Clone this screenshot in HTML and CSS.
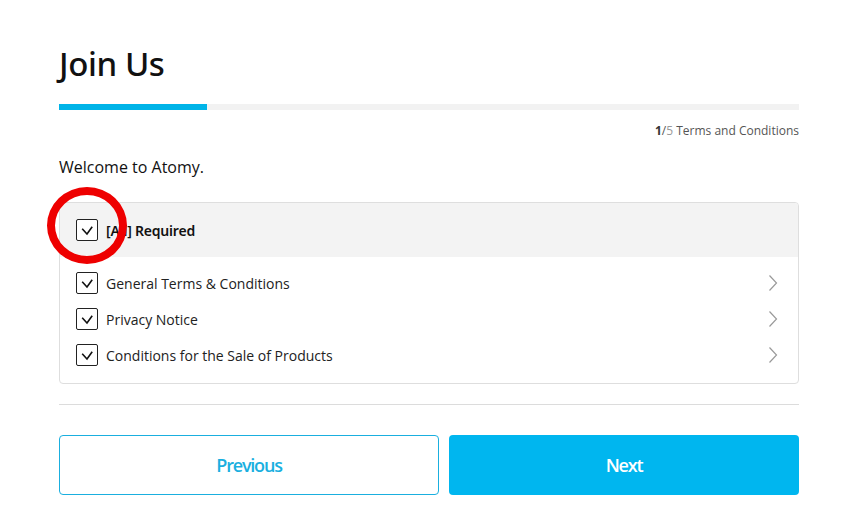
FILE: index.html
```html
<!DOCTYPE html>
<html lang="en">
<head>
<meta charset="utf-8">
<title>Join Us</title>
<link rel="stylesheet" href="styles.css">
</head>
<body>
<div class="page">
  <h1 class="title">Join Us</h1>
  <div class="progress"><div class="progress-fill"></div></div>
  <div class="step"><b>1</b>/<span class="step-total">5</span> Terms and Conditions</div>
  <p class="welcome">Welcome to Atomy.</p>
  <div class="terms">
    <div class="terms-head">
      <span class="check"><svg viewBox="0 0 22 22" width="22" height="22"><path d="M6.2 9.8 L11 15 L16.2 7.8" fill="none" stroke="#111" stroke-width="1.6"/></svg></span>
      <span class="head-label">[All] Required</span>
    </div>
    <div class="terms-list">
      <div class="term">
        <span class="check"><svg viewBox="0 0 22 22" width="22" height="22"><path d="M6.2 9.8 L11 15 L16.2 7.8" fill="none" stroke="#111" stroke-width="1.6"/></svg></span>
        <span class="term-label">General Terms &amp; Conditions</span>
        <svg class="chev" viewBox="0 0 10 18" width="10" height="18"><path d="M1.5 1.5 L8.5 9 L1.5 16.5" fill="none" stroke="#9a9a9a" stroke-width="1.2"/></svg>
      </div>
      <div class="term">
        <span class="check"><svg viewBox="0 0 22 22" width="22" height="22"><path d="M6.2 9.8 L11 15 L16.2 7.8" fill="none" stroke="#111" stroke-width="1.6"/></svg></span>
        <span class="term-label">Privacy Notice</span>
        <svg class="chev" viewBox="0 0 10 18" width="10" height="18"><path d="M1.5 1.5 L8.5 9 L1.5 16.5" fill="none" stroke="#9a9a9a" stroke-width="1.2"/></svg>
      </div>
      <div class="term">
        <span class="check"><svg viewBox="0 0 22 22" width="22" height="22"><path d="M6.2 9.8 L11 15 L16.2 7.8" fill="none" stroke="#111" stroke-width="1.6"/></svg></span>
        <span class="term-label">Conditions for the Sale of Products</span>
        <svg class="chev" viewBox="0 0 10 18" width="10" height="18"><path d="M1.5 1.5 L8.5 9 L1.5 16.5" fill="none" stroke="#9a9a9a" stroke-width="1.2"/></svg>
      </div>
    </div>
  </div>
  <hr class="divider">
  <div class="actions">
    <button class="btn btn-prev">Previous</button>
    <button class="btn btn-next">Next</button>
  </div>
  <div class="highlight"></div>
</div>
</body>
</html>
```
FILE: styles.css
```css
* { box-sizing: border-box; }
html, body { margin: 0; padding: 0; background: #fff; }
body {
  font-family: "Open Sans", "Noto Sans", sans-serif;
  color: #111;
  width: 856px;
  height: 532px;
  overflow: hidden;
}
.page {
  position: relative;
  width: 740px;
  margin-left: 59px;
  padding-top: 40px;
}
.title {
  margin: 0;
  font-family: "Noto Sans", "Open Sans", sans-serif;
  font-size: 33px;
  line-height: 48px;
  font-weight: 500;
  letter-spacing: -0.4px;
}
.progress {
  margin-top: 16px;
  height: 6px;
  background: #f2f2f2;
}
.progress-fill {
  width: 148px;
  height: 6px;
  background: #00b4e8;
}
.step {
  margin-top: 13px;
  text-align: right;
  font-size: 12px;
  line-height: 16px;
  color: #555;
}
.step b { font-weight: 700; color: #333; }
.step-total { color: #999; }
.welcome {
  margin: 17px 0 0;
  font-size: 16px;
  line-height: 22px;
}
.terms {
  margin-top: 24px;
  border: 1px solid #dedede;
  border-radius: 4px;
  overflow: hidden;
}
.terms-head {
  display: flex;
  align-items: center;
  gap: 8px;
  height: 54px;
  padding-left: 16px;
  background: #f3f3f3;
}
.head-label {
  font-family: "Noto Sans", "Open Sans", sans-serif;
  font-size: 14px;
  font-weight: 600;
  letter-spacing: -0.2px;
}
.check {
  display: block;
  width: 22px;
  height: 22px;
  border: 1px solid #222;
  border-radius: 2px;
  background: #fff;
  flex: none;
}
.check svg { display: block; margin: -1px; }
.terms-list {
  padding: 8px 0 10px;
}
.term {
  display: flex;
  align-items: center;
  gap: 8px;
  height: 36px;
  padding-left: 16px;
  padding-right: 20px;
}
.term-label {
  flex: 1;
  font-size: 14px;
  color: #222;
}
.chev { display: block; flex: none; }
.divider {
  margin: 20px 0 0;
  border: 0;
  border-top: 1px solid #dcdcdc;
  height: 0;
}
.actions {
  display: flex;
  gap: 10px;
  margin-top: 30px;
}
.btn {
  height: 60px;
  border-radius: 4px;
  font-family: inherit;
  font-size: 18px;
  font-weight: 600;
  letter-spacing: -1.2px;
  cursor: pointer;
}
.btn-prev {
  width: 380px;
  background: #fff;
  border: 1px solid #1aafdf;
  color: #1aafdf;
}
.btn-next {
  width: 350px;
  background: #00b6ef;
  border: 0;
  color: #fff;
}
.highlight {
  position: absolute;
  left: -12px;
  top: 187px;
  width: 80px;
  height: 77px;
  border: 8px solid #ee0000;
  border-radius: 50%;
  pointer-events: none;
}
```
